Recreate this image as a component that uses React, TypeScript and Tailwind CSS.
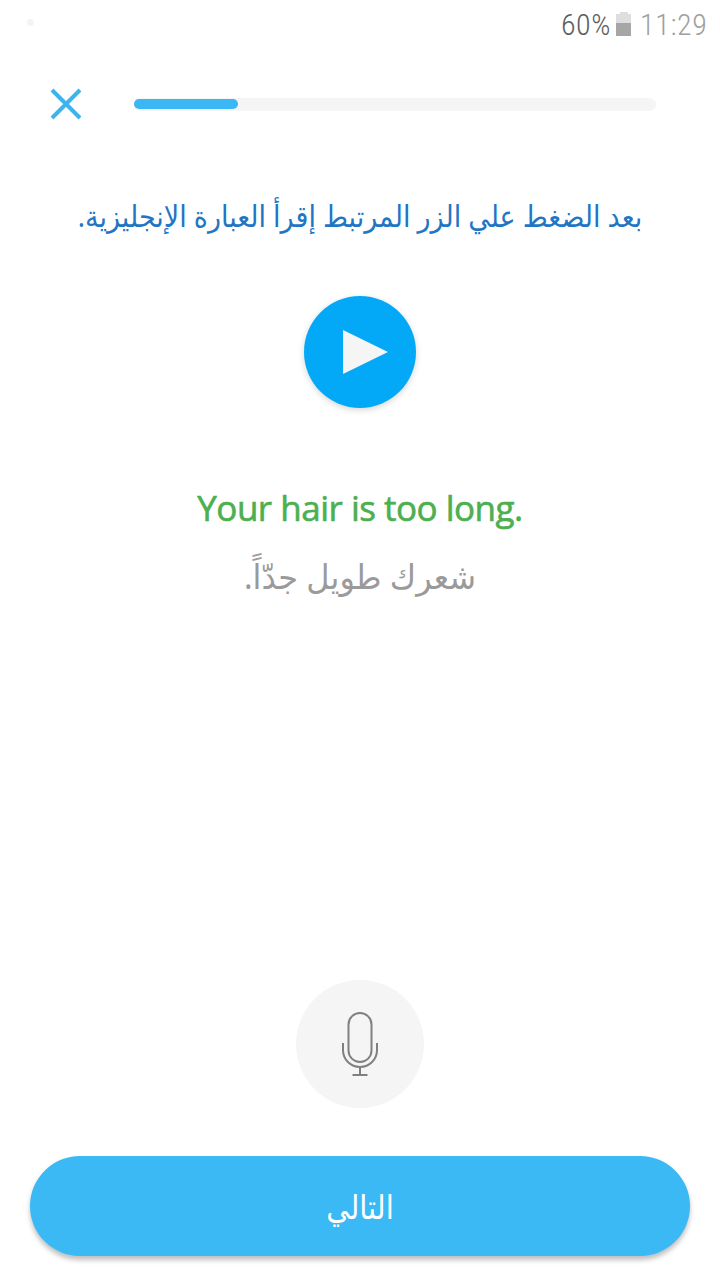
const arabic = '"Noto Sans", "DejaVu Sans", sans-serif';

export default function App() {
  return (
    <main dir="ltr" className="flex h-[1280px] w-[720px] flex-col items-center overflow-hidden bg-white">
      <header className="flex h-[50px] w-full shrink-0 items-center justify-between pl-[27px] pr-[13px]">
        <span className="-mt-[6px] size-[7px] rounded-full bg-[#f4f4f4]" />
        <div className="flex items-center whitespace-nowrap font-['Roboto_Condensed','Roboto',sans-serif] text-[30px] leading-[50px]">
          <span className="w-[49px] font-light tracking-[0.5px] text-[#5c5c5c]">60%</span>
          <svg className="ml-[6px]" width="15" height="50" viewBox="0 0 15 50">
            <path d="M0 14h4v-2h8v2h3v22H0z" fill="#dedede" />
            <path d="M0 23h15v13H0z" fill="#a6a6a6" />
          </svg>
          <span className="ml-[9px] w-[67px] font-light tracking-[0.6px] text-[#a0a0a0]">11:29</span>
        </div>
      </header>
      <div className="flex h-[108px] w-full shrink-0 items-center pl-[50px]">
        <button aria-label="Close" className="size-8">
          <svg width="32" height="32" viewBox="0 0 32 32">
            <path d="M2 2l28 28M30 2L2 30" stroke="#3eb4ee" strokeWidth="4" />
          </svg>
        </button>
        <div className="ml-[52px] h-[13px] w-[522px] rounded-full bg-[#f5f5f5] pt-px">
          <div className="h-[10px] w-[104px] rounded-full bg-[#3ab7f4]" />
        </div>
      </div>
      <h1 dir="rtl" className="mt-[34px] h-12 shrink-0 scale-y-[1.1] whitespace-nowrap text-[27px] leading-[48px] text-[#1f76c4]" style={{ fontFamily: arabic }}>
        بعد الضغط علي الزر المرتبط إقرأ العبارة الإنجليزية.
      </h1>
      <button aria-label="Play" className="mt-[56px] size-28 shrink-0 rounded-full bg-[#03a9f6] shadow-[0_2px_6px_rgba(0,0,0,0.17)]">
        <svg width="112" height="112" viewBox="0 0 112 112">
          <path d="M39 34l45 22-45 22z" fill="#f5f5f5" />
        </svg>
      </button>
      <p className="mt-[76px] h-12 shrink-0 whitespace-nowrap font-['Open_Sans',sans-serif] text-[35px] font-medium leading-[48px] tracking-[-0.5px] text-[#4caf50] [-webkit-text-stroke:0.6px_#4caf50]">
        Your hair is too long.
      </p>
      <p dir="rtl" className="mt-[20px] h-12 shrink-0 scale-y-[1.06] whitespace-nowrap text-[32px] leading-[48px] text-[#9a9a9a]" style={{ fontFamily: arabic }}>
        شعرك طويل جدّاً.
      </p>
      <button aria-label="Record" className="mt-auto size-32 shrink-0 rounded-full bg-[#f5f5f5]">
        <svg width="128" height="128" viewBox="0 0 128 128" fill="none" stroke="#808080" strokeWidth="2">
          <rect x="52.5" y="33" width="23" height="49" rx="11.5" />
          <path d="M47 63v7c0 9.500 7.500 17 17 17s17-7.500 17-17v-7M64 87v8M56.500 95h15" />
        </svg>
      </button>
      <button dir="rtl" className="mb-6 mt-12 h-[100px] w-[660px] shrink-0 rounded-full bg-[#3ab9f5] text-[29px] text-white shadow-[0_4px_5px_rgba(0,0,0,0.25)]" style={{ fontFamily: arabic }}>
        <span className="inline-block scale-y-[1.15]">التالي</span>
      </button>
    </main>
  );
}
